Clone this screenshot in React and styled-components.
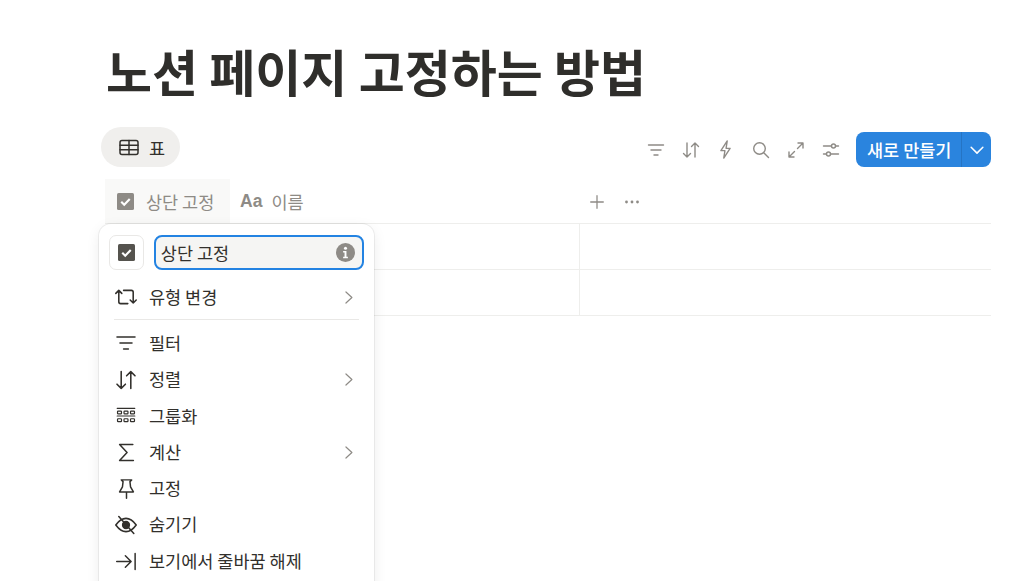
import React from 'react'
import styled, { createGlobalStyle } from 'styled-components'

const GlobalStyle = createGlobalStyle`
html, body {
  margin: 0;
  padding: 0;
  height: 100%;
  overflow: hidden;
  background: #fff;
}
body {
  font-family: "Noto Sans CJK KR", "Noto Sans", sans-serif;
  color: #32302c;
}
`

const Page = styled.div`
  position: relative;
  width: 1032px;
  height: 581px;
  overflow: hidden;
  padding: 0 41px 0 101px;
  box-sizing: border-box;
`
const Title = styled.h1`
  margin: 0;
  padding: 34px 0 0 5px;
  height: 127px;
  box-sizing: border-box;
  font-size: 50px;
  letter-spacing: 0;
  line-height: 72px;
  font-weight: 700;
  color: #2f2e2b;
  white-space: nowrap;
`
const Toolbar = styled.div`
  display: flex;
  align-items: center;
  justify-content: space-between;
  height: 40px;
`
const ViewTab = styled.div`
  display: flex;
  align-items: center;
  gap: 10px;
  height: 40px;
  width: 79px;
  padding-left: 18px;
  box-sizing: border-box;
  border-radius: 20px;
  background: #f0efed;
  font-size: 17.5px;
  color: #32302c;
`
const Actions = styled.div`
  display: flex;
  align-items: center;
  align-self: flex-end;
`
const ActionIcon = styled.span`
  display: flex;
  align-items: center;
  justify-content: center;
  width: 35px;
  height: 35px;
  color: #8e8b86;
`
const NewButton = styled.div`
  display: flex;
  align-items: stretch;
  height: 35px;
  margin-left: 8px;
  border-radius: 8px;
  overflow: hidden;
  background: #2a84de;
  color: #fff;
  font-size: 17.5px;
  font-weight: 500;
  white-space: nowrap;
`
const NewLabel = styled.span`
  display: flex;
  align-items: center;
  width: 106px;
  padding-left: 11px;
  padding-bottom: 1px;
  box-sizing: border-box;
  border-right: 1px solid #2574c4;
`
const NewCaret = styled.span`
  display: flex;
  align-items: center;
  justify-content: center;
  width: 29px;
`
const Table = styled.div`
  margin: 12px 0 0 4px;
`
const HeadRow = styled.div`
  display: grid;
  grid-template-columns: 125px 350px 1fr;
  height: 44px;
  border-bottom: 1px solid #eeeeec;
`
const HeadCell = styled.div`
  display: flex;
  align-items: center;
  gap: ${(p) => p.$gap}px;
  padding-left: ${(p) => p.$pad}px;
  background: ${(p) => (p.$active ? '#f9f9f8' : 'transparent')};
  color: #8e8b86;
  font-size: 17.5px;
  white-space: nowrap;
`
const TypeGlyph = styled.span`
  font-family: "Liberation Sans", sans-serif;
  font-size: 17.5px;
  font-weight: 700;
  line-height: 20px;
`
const Row = styled.div`
  display: grid;
  grid-template-columns: 475px 1fr;
  height: 45px;
  border-bottom: 1px solid #eeeeec;
`
const Cell = styled.div`
  border-right: 1px solid #eeeeec;
`
const HeadTools = styled.div`
  display: flex;
  align-items: center;
  gap: 17px;
  padding: 2px 0 0 8px;
  color: #8e8b86;
`
const Menu = styled.div`
  position: absolute;
  left: 99px;
  top: 224px;
  width: 275px;
  height: 380px;
  box-sizing: border-box;
  padding: 11px 10px 0;
  background: #fff;
  border-radius: 12px;
  box-shadow: 0 0 0 1px rgba(25, 25, 25, 0.06), 0 4px 14px rgba(25, 25, 25, 0.08);
`
const NameRow = styled.div`
  display: flex;
  align-items: center;
  gap: 10px;
  height: 35px;
  margin-bottom: 9px;
`
const IconBox = styled.div`
  display: flex;
  align-items: center;
  justify-content: center;
  width: 35px;
  height: 35px;
  box-sizing: border-box;
  border: 1px solid #e9e8e6;
  border-radius: 7px;
`
const NameInput = styled.div`
  display: flex;
  align-items: center;
  justify-content: space-between;
  width: 211px;
  height: 35px;
  box-sizing: border-box;
  padding: 0 7px 1px 5px;
  border: 2px solid #2383e2;
  border-radius: 8px;
  background: #f5f5f3;
  font-size: 17.5px;
  color: #32302c;
`
const MenuItem = styled.div`
  display: flex;
  align-items: center;
  height: 36.3px;
  font-size: 17.5px;
  color: #32302c;
  white-space: nowrap;
`
const ItemIcon = styled.span`
  display: flex;
  align-items: center;
  justify-content: center;
  width: 34px;
  margin-right: 6px;
  flex: none;
`
const ItemLabel = styled.span`
  flex: 1;
  padding-bottom: 2px;
`
const Chevron = styled.span`
  display: flex;
  margin-right: 7px;
  color: #8e8b86;
`
const Divider = styled.div`
  height: 1px;
  margin: 4px 5px 5px;
  background: #e9e8e6;
`

const Svg = ({ size = 20, sw = 1.4, children }) => (
  <svg width={size} height={size} viewBox="0 0 20 20" fill="none" stroke="currentColor" strokeWidth={sw} strokeLinecap="round" strokeLinejoin="round">
    {children}
  </svg>
)

const FilterIcon = (p) => <Svg {...p}><path d="M2.5 5h15M5 10h10M8 15h4" /></Svg>
const SortIcon = (p) => <Svg {...p}><path d="M6 3v14M2.5 13.5 6 17l3.5-3.5M14 17V3M10.500 6.500 14 3l3.500 3.500" /></Svg>
const BoltIcon = () => <Svg size={23} sw={1.2}><path d="M11.500 2.500 6 11h3.500l-1 6.500L14 9h-3.500z" /></Svg>
const SearchIcon = () => <Svg><circle cx="8.500" cy="8.500" r="5.800" /><path d="m13 13 4.500 4.500" /></Svg>
const ExpandIcon = () => <Svg><path d="M11.500 8.500 17 3M12 3h5v5M8.500 11.500 3 17M3 12v5h5" /></Svg>
const SlidersIcon = () => <Svg><path d="M2.500 6h8M14.500 6h3M2.500 14h3M9.500 14h8" /><circle cx="12.500" cy="6" r="2" /><circle cx="7.500" cy="14" r="2" /></Svg>
const CaretDown = () => <Svg size={18} sw={1.7}><path d="m3.500 7 6.500 6.500L16.500 7" /></Svg>
const ChevronRight = () => <Svg size={17} sw={1.4}><path d="m7 3.500 7 6.500-7 6.500" /></Svg>

const TableIcon = () => (
  <Svg size={20} sw={1.500}>
    <rect x="1" y="3.500" width="18" height="14" rx="2" />
    <path d="M1 8.200h18M1 12.800h18M10 3.500v14" />
  </Svg>
)

const CheckSquare = ({ color, size = 17 }) => (
  <svg width={size} height={size} viewBox="0 0 16 16">
    <rect width="16" height="16" rx="1.500" fill={color} />
    <path d="m4 8.200 2.800 2.800L12 5.600" fill="none" stroke="#fff" strokeWidth="2" />
  </svg>
)

const SwapIcon = () => (
  <Svg size={24} sw={1.300}>
    <path d="M1.500 7 4 4.500 6.500 7M4 4.500V14q0 1.500 1.500 1.500h6M8 4.500h6.500Q16 4.500 16 6v9M13.500 12.500 16 15l2.500-2.500" />
  </Svg>
)
const GroupIcon = () => (
  <Svg size={22} sw={1.100}>
    <path d="M2 3h16M2 10h16" />
    <rect x="2.300" y="5.500" width="3.600" height="2.600" rx=".6" />
    <rect x="8.200" y="5.500" width="3.600" height="2.600" rx=".6" />
    <rect x="14.100" y="5.500" width="3.600" height="2.600" rx=".6" />
    <rect x="2.300" y="12.500" width="3.600" height="2.600" rx=".6" />
    <rect x="8.200" y="12.500" width="3.600" height="2.600" rx=".6" />
    <rect x="14.100" y="12.500" width="3.600" height="2.600" rx=".6" />
  </Svg>
)
const SigmaIcon = () => <Svg size={23} sw={1.300}><path d="M15.500 3H4l6.500 7L4 17h12" /></Svg>
const PinIcon = () => <Svg size={23} sw={1.300}><path d="M5.500 2.500h9l-1.500 1.500.5 4.500L16 13H4l2.500-4.500L7 4zM10 13v5.500" /></Svg>
const EyeOffIcon = () => (
  <Svg size={24} sw={1.300}>
    <path d="M1.500 10Q5.500 4.500 10 4.500T18.500 10Q14.500 15.500 10 15.500T1.500 10z" />
    <circle cx="10" cy="10" r="2.800" fill="currentColor" />
    <path d="M4 3l12.500 14" />
  </Svg>
)
const WrapIcon = () => <Svg size={23} sw={1.300}><path d="M1.500 10h12M9 5l5 5-5 5M17.500 3v14" /></Svg>

const InfoIcon = () => (
  <svg width="19" height="19" viewBox="0 0 20 20">
    <circle cx="10" cy="10" r="10" fill="#8e8b86" />
    <circle cx="10" cy="5.500" r="1.600" fill="#fff" />
    <path d="M7.500 8.500h3.500v6h1.500v1.500h-5v-1.500H9v-4.500H7.500z" fill="#fff" />
  </svg>
)

const items = [
  { label: '필터', icon: <FilterIcon size={24} sw={1.300} /> },
  { label: '정렬', icon: <SortIcon size={24} sw={1.300} />, more: true },
  { label: '그룹화', icon: <GroupIcon /> },
  { label: '계산', icon: <SigmaIcon />, more: true },
  { label: '고정', icon: <PinIcon /> },
  { label: '숨기기', icon: <EyeOffIcon /> },
  { label: '보기에서 줄바꿈 해제', icon: <WrapIcon /> },
]

const App = () => {
  return (
    <Page>
      <GlobalStyle />
      <Title>노션 페이지 고정하는 방법</Title>
      <Toolbar>
        <ViewTab>
          <TableIcon />
          <span>표</span>
        </ViewTab>
        <Actions>
          <ActionIcon><FilterIcon /></ActionIcon>
          <ActionIcon><SortIcon /></ActionIcon>
          <ActionIcon><BoltIcon /></ActionIcon>
          <ActionIcon><SearchIcon /></ActionIcon>
          <ActionIcon><ExpandIcon /></ActionIcon>
          <ActionIcon><SlidersIcon /></ActionIcon>
          <NewButton>
            <NewLabel>새로 만들기</NewLabel>
            <NewCaret><CaretDown /></NewCaret>
          </NewButton>
        </Actions>
      </Toolbar>
      <Table>
        <HeadRow>
          <HeadCell $active $pad={12} $gap={12}>
            <CheckSquare color="#8e8b86" />
            <span>상단 고정</span>
          </HeadCell>
          <HeadCell $pad={10} $gap={9}>
            <TypeGlyph>Aa</TypeGlyph>
            <span>이름</span>
          </HeadCell>
          <HeadTools>
            <Svg size={18} sw={1.400}><path d="M10 3v14M3 10h14" /></Svg>
            <svg width="18" height="18" viewBox="0 0 18 18" fill="currentColor">
              <circle cx="3.500" cy="9" r="1.400" />
              <circle cx="9" cy="9" r="1.400" />
              <circle cx="14.500" cy="9" r="1.400" />
            </svg>
          </HeadTools>
        </HeadRow>
        <Row><Cell /></Row>
        <Row><Cell /></Row>
      </Table>
      <Menu>
        <NameRow>
          <IconBox><CheckSquare color="#55534e" /></IconBox>
          <NameInput>
            <span>상단 고정</span>
            <InfoIcon />
          </NameInput>
        </NameRow>
        <MenuItem>
          <ItemIcon><SwapIcon /></ItemIcon>
          <ItemLabel>유형 변경</ItemLabel>
          <Chevron><ChevronRight /></Chevron>
        </MenuItem>
        <Divider />
        {items.map((item) => (
          <MenuItem key={item.label}>
            <ItemIcon>{item.icon}</ItemIcon>
            <ItemLabel>{item.label}</ItemLabel>
            {item.more && <Chevron><ChevronRight /></Chevron>}
          </MenuItem>
        ))}
      </Menu>
    </Page>
  )
}

export default App
